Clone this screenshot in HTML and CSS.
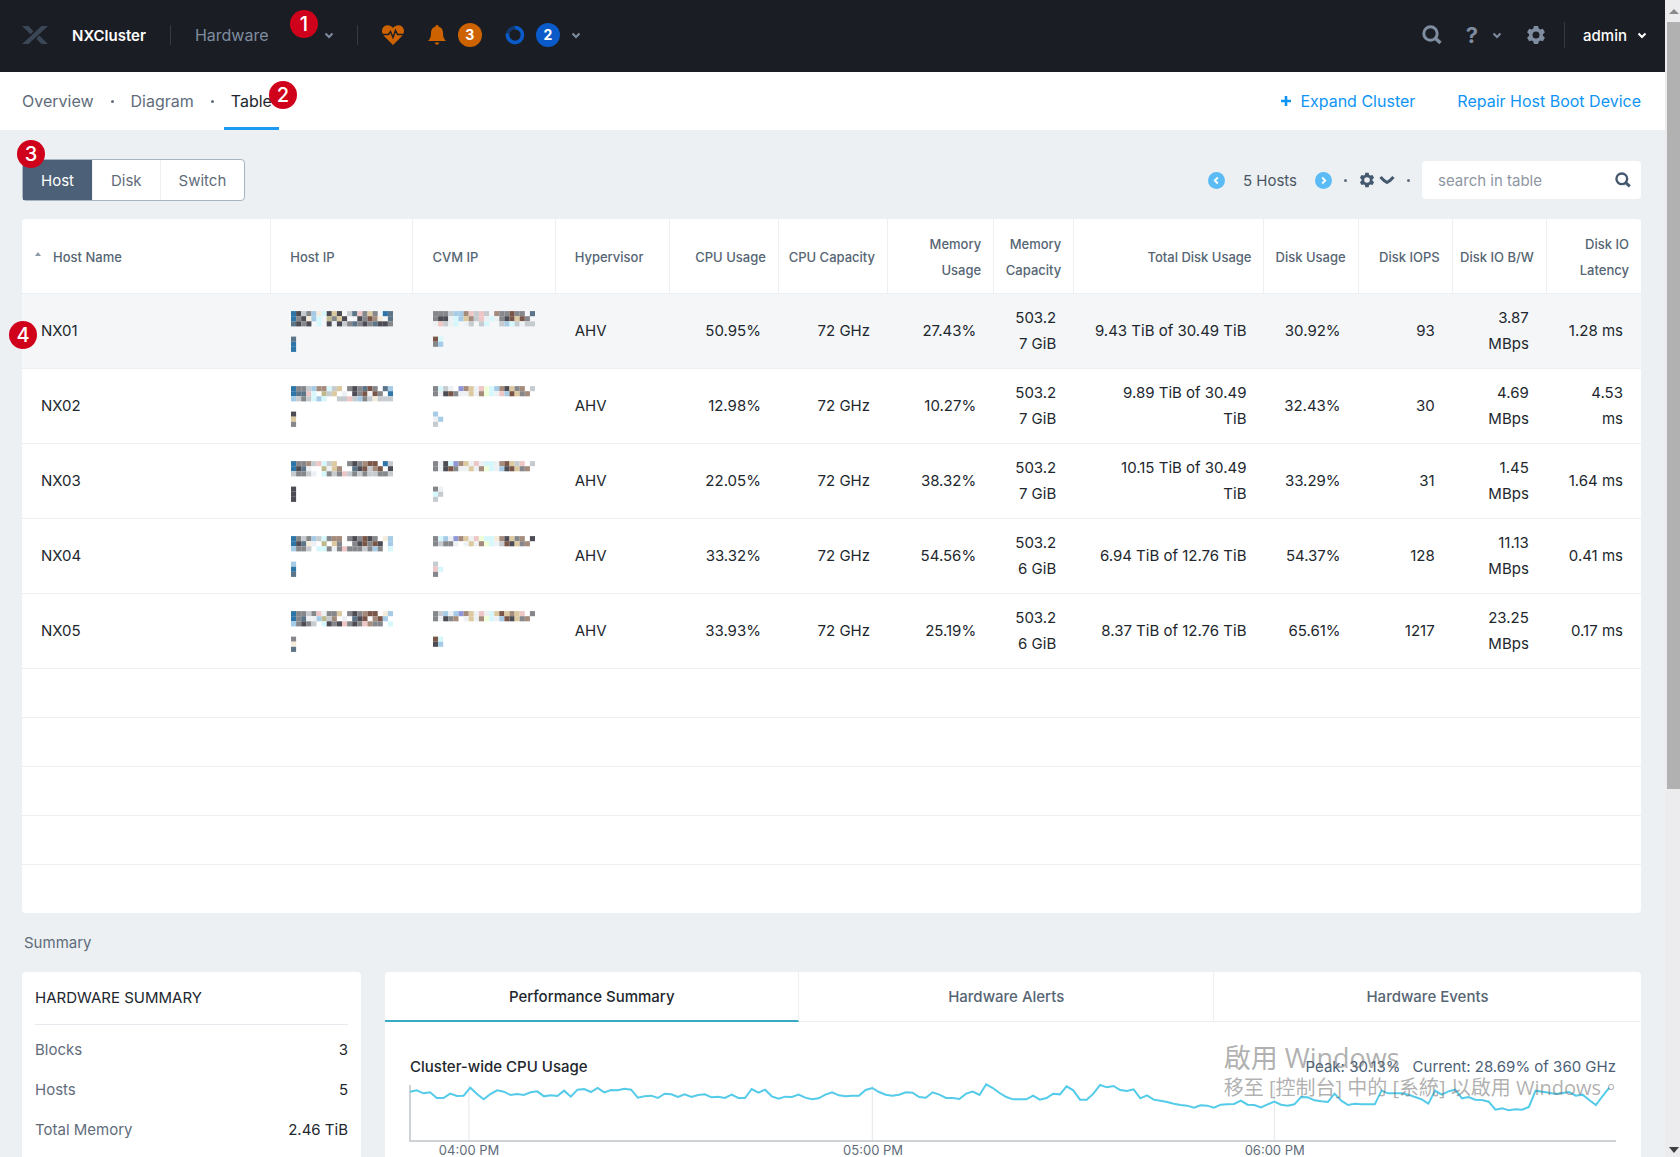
FILE: index.html
```html
<!DOCTYPE html>
<html lang="en">
<head>
    <meta charset="UTF-8">
    <meta name="viewport" content="width=device-width, initial-scale=1.0">
    <title>NXCluster - Hardware</title>
    <link rel="stylesheet" href="styles.css">
</head>
<body>
    <!-- shared icons -->
    <svg class="sprite" width="0" height="0" aria-hidden="true">
        <symbol id="chevron" viewBox="0 0 10 10"><path d="M1.5 3.5 5 7l3.5-3.5" fill="none" stroke="currentColor" stroke-width="2"/></symbol>
        <symbol id="search" viewBox="0 0 20 20"><circle cx="8.5" cy="8.5" r="6.7" fill="none" stroke="currentColor" stroke-width="3"/><path d="M13 13l5.5 5" stroke="currentColor" stroke-width="3.6"/></symbol>
        <symbol id="gear" viewBox="0 0 20 20"><path fill="currentColor" fill-rule="evenodd" d="M7.9 1h4.2l.6 2.6 1.5.9 2.6-.8 2.1 3.6-2 1.9v1.6l2 1.9-2.1 3.6-2.6-.8-1.5.9-.6 2.6H7.9l-.6-2.6-1.5-.9-2.6.8-2.1-3.6 2-1.9V9.2l-2-1.9 2.1-3.6 2.6.8 1.5-.9zM10 6.5a3.5 3.5 0 1 0 0 7 3.5 3.5 0 1 0 0-7z"/></symbol>
    </svg>

    <div class="page">
        <header class="topbar">
            <svg class="logo" viewBox="0 0 26 18"><path fill="#3b4757" d="M0 0h6.5l5 5.2-3 3zM0 18h6.5L26 0h-6.5l-6.2 5.8L9 10zM17.3 9.6 26 18h-6.5l-5.2-5.3z"/></svg>
            <a class="cluster-name" href="#">NXCluster</a>
            <span class="divider"></span>
            <button class="menu hardware-menu">Hardware <svg class="chev"><use href="#chevron"/></svg><span class="step step-1">1</span></button>
            <span class="divider"></span>
            <button class="status" aria-label="Health">
                <svg width="22" height="20" viewBox="0 0 22 20"><path fill="#cd6300" d="M11 20 2 11C-.8 8-.5 3.5 2 1.5 4.8-.7 8.8 0 11 3c2.2-3 6.2-3.7 9-1.5 2.5 2 2.8 6.5 0 9.5z"/><path d="M0 9.5h6.5l2-3 2.5 6 2.5-7 2 4H22" fill="none" stroke="#1b1d24" stroke-width="1.5"/></svg>
            </button>
            <button class="status alerts" aria-label="Alerts">
                <svg width="18" height="20" viewBox="0 0 18 20"><path fill="#cd6300" d="M9 0c1 0 1.5.6 1.6 1.4C13.5 2.2 15 4.5 15 8c0 4 1 6 3 8H0c2-2 3-4 3-8 0-3.5 1.5-5.8 4.4-6.6C7.5.6 8 0 9 0zM7 17.5h4c0 3-4 3-4 0z"/></svg>
                <span class="count orange">3</span>
            </button>
            <button class="status tasks" aria-label="Tasks">
                <svg width="20" height="20" viewBox="0 0 20 20"><circle cx="10" cy="10" r="7.5" fill="none" stroke="#123a70" stroke-width="3.5"/><path d="M10 2.5a7.5 7.5 0 1 1-7.4 6" fill="none" stroke="#0a5bc9" stroke-width="3.5"/></svg>
                <span class="count blue">2</span>
                <svg class="chev"><use href="#chevron"/></svg>
            </button>
            <div class="topbar-right">
                <button class="menu" aria-label="Search"><svg width="20" height="20"><use href="#search"/></svg></button>
                <button class="menu help" aria-label="Help"><span class="question">?</span><svg class="chev"><use href="#chevron"/></svg></button>
                <button class="menu" aria-label="Settings"><svg width="20" height="20"><use href="#gear"/></svg></button>
                <span class="divider"></span>
                <button class="menu admin">admin <svg class="chev"><use href="#chevron"/></svg></button>
            </div>
        </header>

        <nav class="subnav">
            <a href="#">Overview</a>
            <span class="dot"></span>
            <a href="#">Diagram</a>
            <span class="dot"></span>
            <a class="active" href="#">Table<span class="step step-2">2</span></a>
            <div class="actions">
                <a href="#"><svg width="10" height="10" viewBox="0 0 10 10"><path d="M5 0v10M0 5h10" stroke="currentColor" stroke-width="2.6"/></svg>Expand Cluster</a>
                <a href="#">Repair Host Boot Device</a>
            </div>
        </nav>

        <main>
            <div class="toolbar">
                <div class="switcher">
                    <button class="selected">Host</button>
                    <button>Disk</button>
                    <button>Switch</button>
                    <span class="step step-3">3</span>
                </div>
                <div class="tools">
                    <button class="round" aria-label="Previous page"><svg width="17" height="17" viewBox="0 0 17 17"><circle cx="8.5" cy="8.5" r="8.5" fill="#5bbcf5"/><path d="M9.8 5.5l-3 3 3 3" fill="none" stroke="#fff" stroke-width="1.8"/></svg></button>
                    <span class="total">5 Hosts</span>
                    <button class="round" aria-label="Next page"><svg width="17" height="17" viewBox="0 0 17 17"><circle cx="8.5" cy="8.5" r="8.5" fill="#5bbcf5"/><path d="M7.2 5.5l3 3-3 3" fill="none" stroke="#fff" stroke-width="1.8"/></svg></button>
                    <span class="dot"></span>
                    <button class="table-settings" aria-label="Table settings"><svg width="16" height="16"><use href="#gear"/></svg><svg width="16" height="10" viewBox="0 0 16 10"><path d="M1.5 2Q5 6 8 7.500 11 6 14.500 2" fill="none" stroke="currentColor" stroke-width="3"/></svg></button>
                    <span class="dot"></span>
                    <label class="search">
                        <input type="text" placeholder="search in table" aria-label="search in table">
                        <svg width="16" height="16"><use href="#search"/></svg>
                    </label>
                </div>
            </div>

            <div class="card hosts">
                <span class="step step-4">4</span>
                <table>
                    <colgroup>
                        <col class="c-name"><col class="c-ip"><col class="c-ip"><col class="c-hyper"><col class="c-cpu"><col class="c-cpu"><col class="c-mem"><col class="c-cap"><col class="c-total"><col class="c-disk"><col class="c-disk"><col class="c-disk"><col class="c-disk">
                    </colgroup>
                    <thead>
                        <tr>
                            <th class="sorted"><svg width="6" height="4" viewBox="0 0 6 4"><path d="M0 4l3-4 3 4z" fill="#8c99a6"/></svg>Host Name</th>
                            <th>Host IP</th>
                            <th>CVM IP</th>
                            <th>Hypervisor</th>
                            <th>CPU Usage</th>
                            <th>CPU Capacity</th>
                            <th>Memory<br>Usage</th>
                            <th>Memory<br>Capacity</th>
                            <th>Total Disk Usage</th>
                            <th>Disk Usage</th>
                            <th>Disk IOPS</th>
                            <th>Disk IO B/W</th>
                            <th>Disk IO<br>Latency</th>
                        </tr>
                    </thead>
                    <tbody>
                        <tr class="hover">
                            <td>NX01</td>
                            <td><svg class="mask" viewBox="0 0 20 8"></svg></td>
                            <td><svg class="mask" viewBox="0 0 20 8"></svg></td>
                            <td>AHV</td><td>50.95%</td><td>72 GHz</td><td>27.43%</td><td>503.2<br>7 GiB</td><td>9.43 TiB of 30.49 TiB</td><td>30.92%</td><td>93</td><td>3.87<br>MBps</td><td>1.28 ms</td>
                        </tr>
                        <tr>
                            <td>NX02</td>
                            <td><svg class="mask" viewBox="0 0 20 8"></svg></td>
                            <td><svg class="mask" viewBox="0 0 20 8"></svg></td>
                            <td>AHV</td><td>12.98%</td><td>72 GHz</td><td>10.27%</td><td>503.2<br>7 GiB</td><td>9.89 TiB of 30.49<br>TiB</td><td>32.43%</td><td>30</td><td>4.69<br>MBps</td><td>4.53<br>ms</td>
                        </tr>
                        <tr>
                            <td>NX03</td>
                            <td><svg class="mask" viewBox="0 0 20 8"></svg></td>
                            <td><svg class="mask" viewBox="0 0 20 8"></svg></td>
                            <td>AHV</td><td>22.05%</td><td>72 GHz</td><td>38.32%</td><td>503.2<br>7 GiB</td><td>10.15 TiB of 30.49<br>TiB</td><td>33.29%</td><td>31</td><td>1.45<br>MBps</td><td>1.64 ms</td>
                        </tr>
                        <tr>
                            <td>NX04</td>
                            <td><svg class="mask" viewBox="0 0 20 8"></svg></td>
                            <td><svg class="mask" viewBox="0 0 20 8"></svg></td>
                            <td>AHV</td><td>33.32%</td><td>72 GHz</td><td>54.56%</td><td>503.2<br>6 GiB</td><td>6.94 TiB of 12.76 TiB</td><td>54.37%</td><td>128</td><td>11.13<br>MBps</td><td>0.41 ms</td>
                        </tr>
                        <tr>
                            <td>NX05</td>
                            <td><svg class="mask" viewBox="0 0 20 8"></svg></td>
                            <td><svg class="mask" viewBox="0 0 20 8"></svg></td>
                            <td>AHV</td><td>33.93%</td><td>72 GHz</td><td>25.19%</td><td>503.2<br>6 GiB</td><td>8.37 TiB of 12.76 TiB</td><td>65.61%</td><td>1217</td><td>23.25<br>MBps</td><td>0.17 ms</td>
                        </tr>
                        <tr class="empty"><td colspan="13"></td></tr>
                        <tr class="empty"><td colspan="13"></td></tr>
                        <tr class="empty"><td colspan="13"></td></tr>
                        <tr class="empty"><td colspan="13"></td></tr>
                        <tr class="empty"><td colspan="13"></td></tr>
                    </tbody>
                </table>
            </div>

            <h2>Summary</h2>

            <div class="summary">
                <section class="card hardware">
                    <h3>HARDWARE SUMMARY</h3>
                    <dl>
                        <div><dt>Blocks</dt><dd>3</dd></div>
                        <div><dt>Hosts</dt><dd>5</dd></div>
                        <div><dt>Total Memory</dt><dd>2.46 TiB</dd></div>
                    </dl>
                </section>
                <section class="card performance">
                    <div class="tabs">
                        <button class="current">Performance Summary</button>
                        <button>Hardware Alerts</button>
                        <button>Hardware Events</button>
                    </div>
                    <div class="chart">
                        <div class="chart-head">
                            <h4>Cluster-wide CPU Usage</h4>
                            <p><span>Peak: 30.13%</span><span>Current: 28.69% of 360 GHz</span></p>
                        </div>
                        <svg class="plot" viewBox="0 60 180 186" preserveAspectRatio="none">
                            <path class="grid" d="M8.8 75V243M69 75V243M129 75V243"/>
                            <path class="axis" d="M0 75V243H180"/>
                            <polyline id="cpuLine" class="line"/>
                        </svg>
                        <div class="times">
                            <span>04:00 PM</span>
                            <span>05:00 PM</span>
                            <span>06:00 PM</span>
                        </div>
                    </div>
                </section>
            </div>
        </main>

        <div class="watermark" lang="zh-Hant">
            <p class="big">啟用 Windows</p>
            <p>移至 [控制台] 中的 [系統] 以啟用 Windows。</p>
        </div>
    </div>

    <div class="scrollbar" aria-hidden="true">
        <svg width="10" height="6" viewBox="0 0 10 6"><path d="M0 6l5-5 5 5z" fill="#8b8b8b"/></svg>
        <div class="thumb"></div>
        <svg width="10" height="6" viewBox="0 0 10 6"><path d="M0 0h10L5 6z" fill="#404040"/></svg>
    </div>

    <script src="script.js"></script>
</body>
</html>
```
FILE: styles.css
```css
* {
    box-sizing: border-box;
}

body {
    margin: 0;
    display: flex;
    height: 100vh;
    overflow: hidden;
    background-color: #ecf0f3;
    color: #22272e;
    font-family: Inter, "Noto Sans CJK TC", sans-serif;
    font-size: 15px;
}

h2, h3, h4, p, dl, dd {
    margin: 0;
    font-weight: normal;
}

button {
    font: inherit;
    color: inherit;
    background: none;
    border: none;
    padding: 0;
    cursor: pointer;
}

a {
    color: inherit;
    text-decoration: none;
}

svg {
    flex: none;
    display: block;
}

.sprite {
    position: absolute;
}

.page {
    position: relative;
    flex: 1;
    min-width: 0;
    overflow: hidden;
}

.chev {
    width: 10px;
    height: 10px;
}

.dot {
    width: 3px;
    height: 3px;
    border-radius: 50%;
    background-color: #5f6c7b;
}

/* numbered callouts */
.step {
    position: absolute;
    width: 28px;
    height: 28px;
    border-radius: 50%;
    background-color: #d0021b;
    color: #fff;
    font-size: 20px;
    font-weight: 500;
    line-height: 28px;
    text-align: center;
}

.step-1 {
    right: 16px;
    top: -7px;
}

.step-2 {
    right: -18px;
    top: 9px;
}

.step-3 {
    left: -6px;
    top: -20px;
}

.step-4 {
    left: -13px;
    top: 102px;
}

/* top bar */
.topbar {
    display: flex;
    align-items: center;
    height: 72px;
    padding: 0 18px 2px 22px;
    background-color: #1b1d24;
    color: #7f8da0;
    font-size: 16px;
}

.logo {
    width: 26px;
    height: 18px;
}

.cluster-name {
    margin: 0 24px;
    color: #fff;
    font-size: 15px;
    font-weight: 600;
}

.divider {
    width: 1px;
    height: 20px;
    background-color: #343a44;
}

.menu,
.status {
    display: flex;
    align-items: center;
}

.hardware-menu {
    position: relative;
    justify-content: space-between;
    width: 139px;
    height: 36px;
    margin: 0 23px 0 24px;
}

.status {
    margin-left: 24px;
}

.alerts {
    gap: 12px;
}

.tasks {
    gap: 11px;
    margin-left: 23px;
}

.count {
    width: 24px;
    height: 24px;
    border-radius: 50%;
    color: #fff;
    font-size: 14px;
    font-weight: 700;
    line-height: 24px;
}

.orange {
    background-color: #cd6300;
}

.blue {
    background-color: #0a5bc9;
}

.topbar-right {
    display: flex;
    align-items: center;
    gap: 24px;
    margin-left: auto;
}

.topbar-right .divider {
    height: 26px;
    margin: 0 -6px;
}

.help {
    gap: 14px;
}

.question {
    font-size: 22px;
    font-weight: 700;
}

.admin {
    gap: 10px;
    color: #fff;
    font-size: 15px;
    font-weight: 500;
}

/* sub navigation */
.subnav {
    display: flex;
    align-items: center;
    height: 58px;
    padding: 0 24px 0 22px;
    background-color: #fff;
    color: #5f6c7b;
    font-size: 16px;
}

.subnav .dot {
    margin: 0 17px;
}

.subnav .active {
    position: relative;
    height: 58px;
    margin-left: -7px;
    padding: 0 7px;
    border-bottom: 3px solid #1b9af2;
    color: #22272e;
    line-height: 58px;
}

.actions {
    display: flex;
    gap: 42px;
    margin-left: auto;
    color: #0f94f5;
}

.actions a {
    display: flex;
    align-items: center;
    gap: 9px;
}

main {
    padding: 29px 24px 0 22px;
}

.card {
    background-color: #fff;
    border-radius: 4px;
}

/* toolbar */
.toolbar {
    display: flex;
    justify-content: space-between;
    align-items: center;
    color: #5f6c7b;
}

.switcher {
    position: relative;
    display: flex;
    height: 42px;
    border: 1px solid #a9b4c4;
    border-radius: 4px;
    background-color: #fff;
}

.switcher button {
    padding: 0 18px;
    border-left: 1px solid #ecf0f3;
}

.switcher .selected {
    border-left: none;
    background-color: #4c6077;
    color: #fff;
}

.tools {
    display: flex;
    align-items: center;
    gap: 12px;
}

.total {
    margin: 0 6px;
    color: #4a5663;
}

.table-settings {
    display: flex;
    align-items: center;
    gap: 4px;
    color: #44586e;
}

.search {
    display: flex;
    align-items: center;
    width: 219px;
    height: 38px;
    padding: 0 10px 0 16px;
    border-radius: 4px;
    background-color: #fff;
    color: #44586e;
}

.search input {
    flex: 1;
    min-width: 0;
    padding: 0;
    border: none;
    outline: none;
    font: inherit;
}

.search input::placeholder {
    color: #8e96a3;
}

/* hosts table */
.hosts {
    position: relative;
    margin-top: 18px;
}

table {
    width: 100%;
    table-layout: fixed;
    border-collapse: separate;
    border-spacing: 0;
}

.c-name { width: 249px; }
.c-ip { width: 142px; }
.c-hyper { width: 114px; }
.c-cpu { width: 109px; }
.c-mem { width: 106px; }
.c-cap { width: 80px; }
.c-total { width: 190px; }
.c-disk { width: 94px; }

th,
td {
    height: 75px;
    padding: 0 18px 0 0;
    border-bottom: 1px solid #ecf0f3;
    line-height: 26px;
    text-align: right;
    white-space: nowrap;
}

th {
    padding-top: 2px;
    padding-right: 12px;
    border-right: 1px solid #ecf0f3;
    color: #566573;
    font-size: 13px;
    font-weight: 500;
}

th:last-child {
    border-right: none;
}

th:nth-child(-n+4),
td:nth-child(-n+4) {
    padding-left: 19px;
    padding-right: 0;
    text-align: left;
}

.sorted svg {
    display: inline-block;
    margin: 0 12px 6px -6px;
}

.hover td {
    background-color: #f4f6f8;
}

.empty td {
    height: 49px;
}

.empty:last-child td {
    height: 48px;
    border-bottom: none;
}

.mask {
    width: 102px;
    height: 41px;
    margin-left: 1px;
}

/* summary */
h2 {
    padding: 18px 2px 17px;
    color: #5f6c7b;
    font-size: 15px;
    line-height: 24px;
}

.summary {
    display: grid;
    grid-template-columns: 339fr 1256fr;
    gap: 24px;
}

.hardware {
    padding: 0 13px 60px;
}

h3 {
    height: 53px;
    border-bottom: 1px solid #e6eaee;
    font-size: 15px;
    line-height: 52px;
}

dl {
    padding-top: 5px;
}

dl div {
    display: flex;
    justify-content: space-between;
    line-height: 40px;
}

dt {
    color: #5f6c7b;
}

.tabs {
    display: flex;
    height: 50px;
}

.tabs button {
    width: 33%;
    border-right: 1px solid #ecf0f3;
    border-bottom: 1px solid #ecf0f3;
    color: #566573;
    font-weight: 500;
}

.tabs button:last-child {
    flex: 1;
    border-right: none;
}

.tabs .current {
    border-bottom: 2px solid #3aa9c4;
    color: #22272e;
}

.chart {
    padding: 32px 25px 30px;
}

.chart-head {
    display: flex;
    justify-content: space-between;
    line-height: 26px;
}

h4 {
    font-size: 15px;
    font-weight: 500;
}

.chart-head p {
    display: flex;
    gap: 12px;
    color: #4c6077;
}

.plot {
    width: 100%;
    height: 62px;
    overflow: visible;
}

.plot * {
    fill: none;
    vector-effect: non-scaling-stroke;
}

.grid {
    stroke: #e6e6e6;
}

.axis {
    stroke: #cfd2d4;
    stroke-width: 2px;
}

.line {
    stroke: #53cbe9;
    stroke-width: 2px;
}

/* each label is centered under its grid line */
.times {
    display: grid;
    grid-template-columns: 98fr 572fr 94fr 236fr;
    color: #5f6c7b;
    font-size: 13px;
    line-height: 16px;
    text-align: center;
    white-space: nowrap;
}

.times span {
    justify-self: center;
}

/* activation notice of the operating system */
.watermark {
    position: absolute;
    right: 44px;
    bottom: 55px;
    color: rgba(110, 110, 110, 0.55);
    font-family: "Open Sans", "Noto Sans CJK TC", sans-serif;
    font-size: 20px;
    font-weight: 300;
    line-height: 28px;
    pointer-events: none;
}

.watermark .big {
    font-size: 27px;
    line-height: 32px;
}

/* scrollbar */
.scrollbar {
    display: flex;
    flex-direction: column;
    align-items: center;
    width: 15px;
    padding: 8px 0 4px 2px;
    background-color: #ececee;
}

.thumb {
    width: 100%;
    height: 67%;
    margin: 8px 0 auto;
    background-color: #b1b1b1;
}
```
FILE: script.js
```js
const cpuUsage = [
    95, 91, 100, 97, 114, 114, 101, 108, 107, 83, 102, 118, 102, 91, 95, 105, 102, 105, 97, 94,
    109, 106, 108, 92, 110, 89, 87, 96, 84, 97, 90, 91, 86, 89, 113, 109, 107, 114, 101, 103,
    111, 103, 111, 105, 103, 112, 110, 114, 104, 114, 114, 87, 98, 89, 109, 116, 110, 111, 104, 113,
    118, 115, 104, 97, 106, 109, 107, 107, 90, 84, 96, 104, 107, 104, 97, 98, 111, 113, 97, 104,
    114, 114, 117, 101, 95, 105, 73, 84, 99, 111, 118, 118, 118, 107, 119, 114, 101, 103, 79, 91,
    119, 119, 101, 75, 82, 78, 90, 93, 88, 115, 106, 119, 122, 126, 131, 135, 137, 143, 136, 137,
    143, 134, 133, 132, 122, 134, 135, 142, 133, 125, 134, 137, 133, 111, 112, 121, 124, 126, 101, 122,
    135, 131, 133, 133, 133, 92, 100, 100, 100, 104, 111, 118, 131, 92, 104, 94, 89, 115, 111, 119,
    120, 125, 149, 145, 151, 148, 149, 141, 92, 95, 98, 102, 99, 96, 107, 104, 120, 135, 108, 83
];

document.getElementById("cpuLine").setAttribute("points", cpuUsage.map((y, x) => x + "," + y).join(" "));

// Masked addresses, one letter per block
const colors = {
    b: "#2f76a8", s: "#5b7488", d: "#4d4c54", g: "#85878b", l: "#c6cbd0", n: "#a58b7c",
    o: "#7a5648", t: "#dcc9a0", k: "#bdb98c", a: "#d6f8fc", c: "#f6ecdc", e: "#a6cbe6",
    v: "#8f97d8", p: "#efc6c6", w: "#eef1f3", y: "#efffd6"
};

const masks = [
    ["bdlgecadtd.lspgtg.bs", "bgdcea.kgtd..dgonc.sb", "sdgd.a.dwdlgsgdgsddg", "", "", "s", "b", "b"],
    ["gggleenplpl.nggogg.s", "gddwaetnlpwawgdotog.", "wplwa.wl.la..lealwll", "", "", "oa", "ge", ""],
    ["bgglennalt.gdgsog.se", "bsspa.klt.w.dgowog.b", "elglaea..llpleglclll", "", "", "d", "t", "g"],
    ["galw.vntwpyaendtgn.l", "gwdogwwtwnyawpeotgn.", "", "", "", "e", "we", "l"],
    ["bggnlpalt..gdgnoo.bl", "bdsw..kwtn..sdolno.d", "lgglw.aglgplglgllggl", "", "", "d", "d", "d"],
    ["gwdavntwpwaawnotlp.l", "gwdogwwtwnyawedotgn.", "", "", "", "gw", "al", "l"],
    ["bglgelagnn.gdgodg.ce", "bdscw.k.tg..gdogod.e", "eggl.aagwgpggglgeg.a", "", "", "e", "b", "s"],
    ["gaewvntwpyaacndtgn.d", "glggw.wtwnyawlodtgn.", "", "", "", "l", "pa", "g"],
    ["bgglgpwggt.gdgnoo.ce", "bgswwekln.w.sdo.noe.", "egdgl.adgdpgdgpngg.a", "", "", "g", "c", "s"],
    ["glewevntwpwatotntp.g", "gwdgn.wtwnyaweodtgn.", "", "", "", "oa", "de", ""]
];

document.querySelectorAll(".mask").forEach((svg, i) => {
    masks[i].forEach((row, y) => {
        [...row].slice(0, 20).forEach((key, x) => {
            if (!colors[key]) return;
            const rect = document.createElementNS("http://www.w3.org/2000/svg", "rect");
            rect.setAttribute("x", x);
            rect.setAttribute("y", y);
            rect.setAttribute("width", 1);
            rect.setAttribute("height", 1);
            rect.setAttribute("fill", colors[key]);
            svg.appendChild(rect);
        });
    });
});
```
